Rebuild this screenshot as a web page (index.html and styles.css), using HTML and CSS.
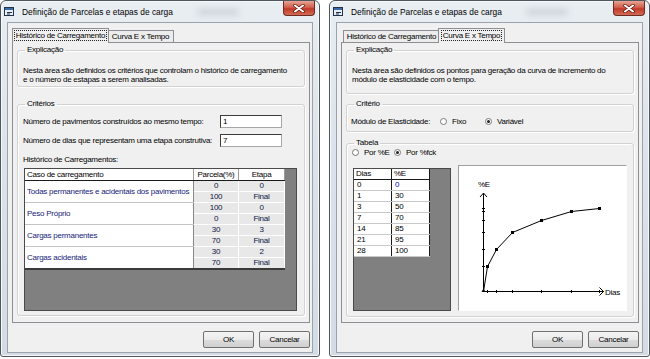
FILE: index.html
```html
<!DOCTYPE html>
<html>
  <head>
    <title>Definição de Parcelas e etapas de carga</title>
    <link rel="stylesheet" href="styles.css">
  </head>
  <body>
  <div class="desktop">

    <!-- dialog 1: loading history tab -->
    <div class="window">
      <div class="titlebar">
        <svg class="app-icon" width="11" height="11" viewBox="0 0 11 11">
          <rect x="0.5" y="1.5" width="9" height="8" fill="#e8eef6" stroke="#23324a"/>
          <rect x="1" y="2" width="8" height="2" fill="#3a6aa8"/>
          <path d="M3 6.5h5M3 8h3" stroke="#23324a" stroke-width="1"/>
        </svg>
        <span class="title">Definição de Parcelas e etapas de carga</span>
        <span class="glass-glow"></span>
        <div class="close-button">
          <svg width="12" height="9" viewBox="0 0 12 9">
            <path d="M2 1.5l8 6M10 1.5l-8 6" stroke="#5a1810" stroke-width="3.4" stroke-linecap="round"/>
            <path d="M2 1.5l8 6M10 1.5l-8 6" stroke="white" stroke-width="2" stroke-linecap="round"/>
          </svg>
        </div>
      </div>
      <div class="client">
        <div class="tabs">
          <div class="tab tab-history active"><span class="focus">Histórico de Carregamento</span></div>
          <div class="tab tab-curve">Curva E x Tempo</div>
        </div>
        <div class="tab-panel">
          <fieldset class="group explain">
            <legend>Explicação</legend>
            <p>Nesta área são definidos os critérios que controlam o histórico de carregamento<br>e o número de estapas a serem analisadas.</p>
          </fieldset>
          <fieldset class="group criteria">
            <legend>Critérios</legend>
            <div class="field-row">
              <span class="field-label">Número de pavimentos construídos ao mesmo tempo:</span>
              <span class="text-box">1</span>
            </div>
            <div class="field-row">
              <span class="field-label">Número de dias que representam uma etapa construtiva:</span>
              <span class="text-box">7</span>
            </div>
            <div class="grid-caption">Histórico de Carregamentos:</div>
            <div class="grid grid-history">
              <table class="history-table">
                <tr>
                  <th class="col-case">Caso de carregamento</th>
                  <th class="col-part">Parcela(%)</th>
                  <th class="col-step">Etapa</th>
                </tr>
                <tr>
                  <td class="case" rowspan="2">Todas permanentes e acidentais dos pavimentos</td>
                  <td class="num">0</td><td class="num">0</td>
                </tr>
                <tr><td class="num">100</td><td class="num">Final</td></tr>
                <tr>
                  <td class="case" rowspan="2">Peso Próprio</td>
                  <td class="num">100</td><td class="num">0</td>
                </tr>
                <tr><td class="num">0</td><td class="num">Final</td></tr>
                <tr>
                  <td class="case" rowspan="2">Cargas permanentes</td>
                  <td class="num">30</td><td class="num">3</td>
                </tr>
                <tr><td class="num">70</td><td class="num">Final</td></tr>
                <tr>
                  <td class="case" rowspan="2">Cargas acidentais</td>
                  <td class="num">30</td><td class="num">2</td>
                </tr>
                <tr><td class="num">70</td><td class="num">Final</td></tr>
              </table>
            </div>
          </fieldset>
        </div>
        <div class="buttons">
          <button class="dialog-button">OK</button>
          <button class="dialog-button">Cancelar</button>
        </div>
      </div>
    </div>

    <!-- dialog 2: E x time curve tab -->
    <div class="window window-right">
      <div class="titlebar">
        <svg class="app-icon" width="11" height="11" viewBox="0 0 11 11">
          <rect x="0.5" y="1.5" width="9" height="8" fill="#e8eef6" stroke="#23324a"/>
          <rect x="1" y="2" width="8" height="2" fill="#3a6aa8"/>
          <path d="M3 6.5h5M3 8h3" stroke="#23324a" stroke-width="1"/>
        </svg>
        <span class="title">Definição de Parcelas e etapas de carga</span>
        <span class="glass-glow"></span>
        <div class="close-button">
          <svg width="12" height="9" viewBox="0 0 12 9">
            <path d="M2 1.5l8 6M10 1.5l-8 6" stroke="#5a1810" stroke-width="3.4" stroke-linecap="round"/>
            <path d="M2 1.5l8 6M10 1.5l-8 6" stroke="white" stroke-width="2" stroke-linecap="round"/>
          </svg>
        </div>
      </div>
      <div class="client">
        <div class="tabs">
          <div class="tab tab-history">Histórico de Carregamento</div>
          <div class="tab tab-curve active"><span class="focus">Curva E x Tempo</span></div>
        </div>
        <div class="tab-panel">
          <fieldset class="group explain explain-curve">
            <legend>Explicação</legend>
            <p>Nesta área são definidos os pontos para geração da curva de incremento do<br>módulo de elasticidade com o tempo.</p>
          </fieldset>
          <fieldset class="group criterion">
            <legend>Critério</legend>
            <div class="field-row">
              <span class="modulus-label">Módulo de Elasticidade:</span>
              <span class="radio radio-fixed"><span class="radio-dot"></span>Fixo</span>
              <span class="radio"><span class="radio-dot checked"></span>Variável</span>
            </div>
          </fieldset>
          <fieldset class="group table-group">
            <legend>Tabela</legend>
            <div class="radio-row">
              <span class="radio radio-percent"><span class="radio-dot"></span>Por %E</span>
              <span class="radio"><span class="radio-dot checked"></span>Por %fck</span>
            </div>
            <div class="curve-row">
              <div class="grid grid-points">
                <table class="points-table">
                  <tr><th>Dias</th><th>%E</th></tr>
                  <tr><td>0</td><td class="selected">0</td></tr>
                  <tr><td>1</td><td>30</td></tr>
                  <tr><td>3</td><td>50</td></tr>
                  <tr><td>7</td><td>70</td></tr>
                  <tr><td>14</td><td>85</td></tr>
                  <tr><td>21</td><td>95</td></tr>
                  <tr><td>28</td><td>100</td></tr>
                </table>
              </div>
              <div class="chart">
                <svg width="167" height="144" viewBox="0 0 167 144">
                  <g stroke="black" stroke-width="1" fill="none">
                    <path d="M24.5 125.5V27.5M21 31l3.5-4 3.5 4"/>
                    <path d="M24.5 125.5H144.5M140.5 121.5l4 4-4 4"/>
                    <path d="M23 100.5h3M23 83.5h3M23 66.5h3M23 54.5h3M23 45.5h3M23 42.5h3"/>
                    <path d="M28.5 124v3M37.5 124v3M53.5 124v3M82.5 124v3M112.5 124v3M140.5 124v3"/>
                    <polyline points="24.5,125.5 28.5,100.5 37.5,83.5 53.5,66.5 82.5,54.5 112.5,45.5 140.5,42.5"/>
                  </g>
                  <g fill="black">
                    <polygon points="22.5,126 24.5,122.5 26.5,126"/>
                    <rect x="27" y="99" width="3" height="3"/>
                    <rect x="36" y="82" width="3" height="3"/>
                    <rect x="52" y="65" width="3" height="3"/>
                    <rect x="81" y="53" width="3" height="3"/>
                    <rect x="111" y="44" width="3" height="3"/>
                    <rect x="139" y="41" width="3" height="3"/>
                  </g>
                  <text x="19" y="21" class="axis-label">%E</text>
                  <text x="146" y="128.5" class="axis-label">Dias</text>
                </svg>
              </div>
            </div>
          </fieldset>
        </div>
        <div class="buttons">
          <button class="dialog-button">OK</button>
          <button class="dialog-button">Cancelar</button>
        </div>
      </div>
    </div>

  </div>
  </body>
</html>
```

FILE: styles.css
```css
body{
  margin: 0;
  background-color: white;
  font-family: "Liberation Sans", Arial, Helvetica, sans-serif;
  font-size: 8px;
  letter-spacing: -0.25px;
  color: black;
}

.desktop{
  display: flex;
  gap: 9px;
}

/* window frame */

.window{
  width: 320px;
  height: 357px;
  box-sizing: border-box;
  border: 1px solid #50565e;
  border-radius: 6px 6px 3px 3px;
  background: linear-gradient(#e9eef3, #dde3ea 40%, #d4dbe3);
  box-shadow: inset 0 0 0 1px #f6f8fa;
  display: flex;
  flex-direction: column;
}

.window-right{
  width: 321px;
}

.titlebar{
  height: 21px;
  display: flex;
  align-items: center;
  padding-left: 3px;
}

.app-icon{
  flex: none;
}

.title{
  margin-left: 7px;
  font-size: 8.4px;
  letter-spacing: 0;
  white-space: nowrap;
}

.glass-glow{
  width: 42px;
  height: 6px;
  margin-left: 24px;
  border-radius: 4px;
  background-color: rgba(120, 128, 138, 0.25);
  filter: blur(3px);
}

.close-button{
  align-self: flex-start;
  margin-left: auto;
  margin-right: 4px;
  width: 32px;
  height: 15px;
  box-sizing: border-box;
  border: 1px solid #6b2c24;
  border-top: none;
  border-radius: 0 0 4px 4px;
  background: linear-gradient(#e8a595, #d0604c 45%, #c0392b 55%, #d46a52);
  display: flex;
  justify-content: center;
  align-items: center;
}

.client{
  height: 331px;
  margin: 0 6px;
  box-sizing: border-box;
  border: 1px solid #9aa3ad;
  background-color: #f0f0f0;
  padding-top: 5px;
  padding-left: 4px;
}

/* tabs */

.tabs{
  display: flex;
  align-items: flex-end;
  height: 14px;
  padding-left: 2px;
}

.tab{
  height: 12px;
  box-sizing: border-box;
  border: 1px solid #8c8e94;
  border-bottom: none;
  background-color: #ececec;
  display: flex;
  justify-content: center;
  align-items: center;
  white-space: nowrap;
}

.tab-history{
  width: 97px;
}

.tab-curve{
  width: 67px;
}

.tab.active{
  height: 15px;
  margin: 0 -2px -1px;
  padding-bottom: 1px;
  background-color: #f0f0f0;
  position: relative;
  z-index: 1;
}

.focus{
  outline: 1px dotted #222;
  padding: 0 1px;
  line-height: 9px;
}

.tab-panel{
  width: 298px;
  height: 281px;
  box-sizing: border-box;
  border: 1px solid #8c8e94;
  padding: 2px 4px 0;
}

/* group boxes */

.group{
  margin: 0;
  padding: 0 5px;
  border: 1px solid #d2d2d2;
  border-radius: 3px;
  box-shadow: inset 1px 1px 0 white, 1px 1px 0 white;
  min-width: 0;
}

.group legend{
  margin-left: 2px;
  padding: 0 2px;
  line-height: 10px;
}

.explain p{
  margin: 11px 0 2px;
  line-height: 9px;
  white-space: nowrap;
}

.explain-curve p{
  margin-bottom: 9px;
}

.criteria{
  margin-top: 12px;
  height: 217px;
  box-sizing: border-box;
}

.field-row{
  display: flex;
  align-items: center;
  height: 13px;
  margin-top: 6px;
}

.field-label{
  width: 197px;
  white-space: nowrap;
}

.text-box{
  width: 62px;
  height: 13px;
  box-sizing: border-box;
  border: 1px solid #a8a8a8;
  border-top-color: #3c3c3c;
  border-left-color: #3c3c3c;
  background-color: white;
  padding-left: 2px;
  line-height: 11px;
}

.grid-caption{
  margin-top: 8px;
  line-height: 9px;
}

/* grids */

.grid{
  box-sizing: border-box;
  border: 1px solid #4a4a4a;
  background-color: #808080;
  display: flex;
  align-items: flex-start;
}

.grid-history{
  margin: 4px 0 0 1px;
  width: 273px;
  height: 143px;
}

.history-table{
  width: 260px;
  table-layout: fixed;
  border-collapse: collapse;
  background-color: white;
  border-right: 1px solid #2a2a2a;
  border-bottom: 2px solid #3a3a3a;
}

.history-table th{
  height: 11px;
  padding: 0 2px;
  font-weight: normal;
  border-bottom: 1px solid #1a1a1a;
  border-right: 1px solid #9a9a9a;
  line-height: 10px;
}

.col-case{
  width: 164px;
  text-align: left;
}

.col-part{
  width: 40px;
}

.col-step{
  width: 41px;
}

.history-table td{
  height: 10px;
  padding: 0;
  line-height: 10px;
}

.case{
  padding-left: 2px !important;
  color: #17237a;
  border-right: 1px solid #8a8a8a;
  border-bottom: 1px solid #c4c4c4;
  white-space: nowrap;
  overflow: hidden;
}

.num{
  text-align: center;
  color: #0d1545;
  background-color: #e8e8e8;
  border: 1px solid white;
}

/* curve tab */

.criterion{
  margin-top: 5px;
  height: 33px;
  box-sizing: border-box;
}

.modulus-label{
  width: 89px;
  margin-left: -1px;
  white-space: nowrap;
}

.radio{
  display: flex;
  align-items: center;
  white-space: nowrap;
}

.radio-fixed{
  width: 45px;
}

.radio-dot{
  width: 7px;
  height: 7px;
  box-sizing: border-box;
  border: 1px solid #7a7a7a;
  border-radius: 50%;
  background-color: white;
  margin-right: 5px;
  display: flex;
  justify-content: center;
  align-items: center;
}

.radio-dot.checked::after{
  content: "";
  width: 3px;
  height: 3px;
  border-radius: 50%;
  background-color: #222;
}

.table-group{
  margin-top: 6px;
  height: 179px;
  box-sizing: border-box;
}

.radio-row{
  display: flex;
  height: 9px;
  align-items: center;
}

.radio-percent{
  width: 42px;
}

.curve-row{
  display: flex;
  margin-top: 8px;
  align-items: flex-start;
}

.grid-points{
  margin: 3px 0 0 1px;
  width: 98px;
  height: 143px;
}

.points-table{
  border-collapse: collapse;
  background-color: white;
  border-right: 1px solid #1a1a1a;
  border-bottom: 1px solid #1a1a1a;
}

.points-table th{
  width: 35px;
  height: 10px;
  padding: 0 0 0 2px;
  font-weight: normal;
  text-align: left;
  line-height: 10px;
  border-bottom: 1px solid #1a1a1a;
  border-right: 1px solid #1a1a1a;
}

.points-table td{
  height: 10px;
  padding: 0 0 0 3px;
  line-height: 10px;
  border-bottom: 1px solid #c8c8c8;
  border-right: 1px solid #1a1a1a;
}

.points-table td.selected{
  color: #0000e0;
}

.chart{
  margin-left: 7px;
  width: 169px;
  height: 146px;
  box-sizing: border-box;
  border: 1px solid white;
  border-top-color: #a0a0a0;
  border-left-color: #a0a0a0;
  background-color: white;
}

.chart svg{
  display: block;
}

.axis-label{
  font-family: "Liberation Sans", Arial, sans-serif;
  font-size: 8px;
}

/* dialog buttons */

.buttons{
  width: 298px;
  display: flex;
  justify-content: flex-end;
  gap: 5px;
  margin-top: 8px;
}

.dialog-button{
  width: 51px;
  height: 17px;
  padding: 0;
  border: 1px solid #707070;
  border-radius: 2px;
  background: linear-gradient(#f4f4f4, #ebebeb 50%, #dcdcdc 51%, #d0d0d0);
  font-family: "Liberation Sans", Arial, sans-serif;
  font-size: 8px;
  letter-spacing: -0.25px;
  color: black;
}
```
